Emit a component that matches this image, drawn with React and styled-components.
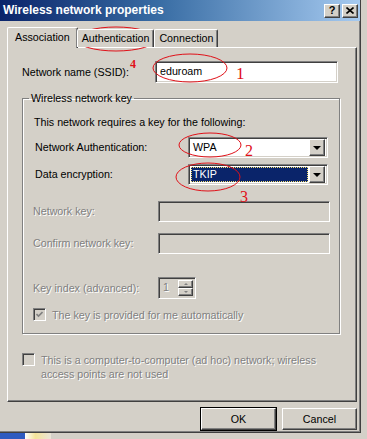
import styled, { createGlobalStyle, css } from "styled-components";

const GlobalStyle = createGlobalStyle`
  html, body {
    margin: 0;
    padding: 0;
  }
  body {
    background: #d4d0c8;
    font-family: "Liberation Sans", Arial, sans-serif;
    font-size: 10.7px;
    line-height: 13px;
    color: #000;
  }
`;

const raised = css`
  background: #d4d0c8;
  border: 1px solid;
  border-color: #fff #404040 #404040 #fff;
  box-shadow: inset -1px -1px 0 #808080;
`;

const sunken = css`
  border: 1px solid;
  border-color: #808080 #fff #fff #808080;
  box-shadow: inset 1px 1px 0 #404040, inset -1px -1px 0 #d4d0c8;
`;

const disabledText = css`
  color: #808080;
  text-shadow: 1px 1px 0 #fff;
`;

const Screen = styled.div`
  position: relative;
  width: 367px;
  height: 439px;
  overflow: hidden;
  background: #d4d0c8;
`;

const Window = styled.div`
  width: 361px;
  height: 433px;
  box-sizing: border-box;
  background: #d4d0c8;
  border-right: 1px solid #404040;
  border-bottom: 1px solid #404040;
  box-shadow: inset -1px -1px 0 #808080;
`;

const TitleBar = styled.div`
  height: 21px;
  display: flex;
  align-items: center;
  padding: 0 2px 0 3px;
  background: linear-gradient(to right, #0a246a 0%, #3a6ea5 45%, #a6caf0 100%);
`;

const Title = styled.span`
  flex: 1;
  color: #fff;
  font-weight: bold;
  font-size: 12px;
`;

const CaptionButton = styled.div`
  ${raised};
  width: 16px;
  height: 14px;
  box-sizing: border-box;
  margin-left: 2px;
  display: flex;
  align-items: center;
  justify-content: center;
  font-weight: bold;
  font-size: 11px;
`;

const Body = styled.div`
  padding: 5px 3px 0 7px;
`;

const Tabs = styled.div`
  display: flex;
  align-items: flex-end;
  height: 21px;
  position: relative;
  z-index: 1;
`;

const Tab = styled.div`
  box-sizing: border-box;
  height: ${p => (p.$active ? 21 : 18)}px;
  padding: ${p => (p.$active ? "3px 7px 0" : "2px 4px 0")};
  background: #d4d0c8;
  border-top: 1px solid #fff;
  border-left: 1px solid #fff;
  border-right: 1px solid #404040;
  border-radius: 2px 2px 0 0;
  box-shadow: inset -1px 0 0 #808080;
  margin-bottom: ${p => (p.$active ? -1 : 0)}px;
  ${p => p.$active && css`
    margin-right: -1px;
  `}
`;

const Panel = styled.div`
  box-sizing: border-box;
  width: 350px;
  height: 355px;
  border: 1px solid;
  border-color: #fff #404040 #404040 #fff;
  box-shadow: inset -1px -1px 0 #808080;
  padding: 13px 0 0 14px;
`;

const Row = styled.div`
  display: flex;
  align-items: center;
  height: ${p => p.$h || 21}px;
  margin-top: ${p => p.$mt || 0}px;
`;

const Label = styled.span`
  flex: none;
  box-sizing: border-box;
  width: ${p => p.$w}px;
  padding-left: ${p => p.$indent || 0}px;
  ${p => p.$disabled && disabledText};
`;

const TextField = styled.div`
  ${sunken};
  box-sizing: border-box;
  width: ${p => p.$w}px;
  height: ${p => p.$h || 21}px;
  background: ${p => (p.$disabled ? "#d4d0c8" : "#fff")};
  padding: 3px 4px;
`;

const Select = styled.div`
  ${sunken};
  box-sizing: border-box;
  width: 140px;
  height: 21px;
  background: #fff;
  display: flex;
  align-items: center;
  padding: 2px;
`;

const SelectValue = styled.div`
  flex: 1;
  height: 15px;
  box-sizing: border-box;
  padding: 1px 2px;
  margin-right: 1px;
  ${p => p.$selected && css`
    background: #0a246a;
    color: #fff;
    outline: 1px dotted #f5e070;
    outline-offset: -1px;
  `}
`;

const DropButton = styled.div`
  ${raised};
  box-sizing: border-box;
  width: 16px;
  height: 17px;
  display: flex;
  align-items: center;
  justify-content: center;
`;

const Arrow = styled.div`
  width: 0;
  height: 0;
  border-left: ${p => p.$size || 4}px solid transparent;
  border-right: ${p => p.$size || 4}px solid transparent;
  ${p => (p.$up
    ? css`border-bottom: ${p.$size || 4}px solid ${p.$color || "#000"};`
    : css`border-top: ${p.$size || 4}px solid ${p.$color || "#000"};`)}
`;

const Group = styled.fieldset`
  box-sizing: border-box;
  width: 317px;
  margin: 9px 0 0;
  padding: 0 9px 11px 10px;
  border: 1px solid #808080;
  box-shadow: inset 1px 1px 0 #fff, 1px 1px 0 #fff;
`;

const Legend = styled.legend`
  padding: 0 2px;
  margin-left: -4px;
  line-height: 13px;
`;

const Intro = styled.div`
  margin-top: 11px;
  padding-left: 1px;
`;

const Spinner = styled.div`
  ${sunken};
  box-sizing: border-box;
  width: 38px;
  height: 22px;
  display: flex;
  padding: 2px;
  background: #d4d0c8;
`;

const SpinValue = styled.div`
  flex: 1;
  padding: 1px 2px;
  ${disabledText};
`;

const SpinButtons = styled.div`
  width: 15px;
  display: flex;
  flex-direction: column;
`;

const SpinButton = styled.div`
  ${raised};
  flex: 1;
  display: flex;
  align-items: center;
  justify-content: center;
`;

const CheckRow = styled.div`
  display: flex;
  align-items: flex-start;
  margin-top: ${p => p.$mt || 0}px;
  padding-left: ${p => p.$indent || 0}px;
  line-height: 14px;
`;

const CheckBox = styled.div`
  ${sunken};
  flex: none;
  box-sizing: border-box;
  width: 13px;
  height: 13px;
  background: #d4d0c8;
  margin: 0 6px 0 0;
  display: flex;
  align-items: center;
  justify-content: center;
`;

const CheckText = styled.span`
  ${disabledText};
`;

const Buttons = styled.div`
  display: flex;
  justify-content: flex-end;
  gap: 6px;
  margin-top: 6px;
`;

const Button = styled.div`
  ${raised};
  box-sizing: border-box;
  width: 75px;
  height: 22px;
  display: flex;
  align-items: center;
  justify-content: center;
  ${p => p.$default && css`
    outline: 1px solid #000;
    outline-offset: 0;
  `}
`;

const Taskbar = styled.div`
  height: 6px;
  display: flex;
  background: #d4d0c8;
`;

const StartChunk = styled.div`
  width: 25px;
  background: #2f5bc0;
`;

const TrayBits = styled.div`
  width: 26px;
  background: linear-gradient(to right, #fff 0%, #f4e39a 40%, #e9e4d8 100%);
`;

const Annotations = styled.svg`
  position: absolute;
  left: 0;
  top: 0;
  pointer-events: none;
`;

const ellipses = [
  { cx: 116, cy: 39, rx: 40, ry: 12 },
  { cx: 190, cy: 68, rx: 37, ry: 14 },
  { cx: 210, cy: 145, rx: 31, ry: 12 },
  { cx: 208, cy: 177, rx: 32, ry: 14 },
];

const marks = [
  { x: 130, y: 68, size: 12, text: "4", bold: true },
  { x: 236, y: 79, size: 17, text: "1" },
  { x: 245, y: 156, size: 16, text: "2" },
  { x: 240, y: 202, size: 16, text: "3" },
];

const App = () => (
  <>
    <GlobalStyle />
    <Screen>
      <Window>
        <TitleBar>
          <Title>Wireless network properties</Title>
          <CaptionButton>?</CaptionButton>
          <CaptionButton>
            <svg width="8" height="7" viewBox="0 0 8 7">
              <path d="M0.5 0.5 L7.5 6.5 M7.5 0.5 L0.5 6.5" stroke="#000" strokeWidth="1.6" />
            </svg>
          </CaptionButton>
        </TitleBar>
        <Body>
          <Tabs>
            <Tab $active>Association</Tab>
            <Tab>Authentication</Tab>
            <Tab>Connection</Tab>
          </Tabs>
          <Panel>
            <Row $h={22}>
              <Label $w={133}>Network name (SSID):</Label>
              <TextField $w={183} $h={22}>eduroam</TextField>
            </Row>
            <Group>
              <Legend>Wireless network key</Legend>
              <Intro>This network requires a key for the following:</Intro>
              <Row $mt={8}>
                <Label $w={155} $indent={2}>Network Authentication:</Label>
                <Select>
                  <SelectValue>WPA</SelectValue>
                  <DropButton><Arrow /></DropButton>
                </Select>
              </Row>
              <Row $mt={6}>
                <Label $w={155} $indent={2}>Data encryption:</Label>
                <Select>
                  <SelectValue $selected>TKIP</SelectValue>
                  <DropButton><Arrow /></DropButton>
                </Select>
              </Row>
              <Row $mt={16}>
                <Label $w={125} $disabled>Network key:</Label>
                <TextField $w={172} $disabled />
              </Row>
              <Row $mt={11}>
                <Label $w={125} $disabled>Confirm network key:</Label>
                <TextField $w={172} $disabled />
              </Row>
              <Row $mt={23} $h={22}>
                <Label $w={125} $disabled>Key index (advanced):</Label>
                <Spinner>
                  <SpinValue>1</SpinValue>
                  <SpinButtons>
                    <SpinButton><Arrow $up $size={2} $color="#808080" /></SpinButton>
                    <SpinButton><Arrow $size={2} $color="#808080" /></SpinButton>
                  </SpinButtons>
                </Spinner>
              </Row>
              <CheckRow $mt={9}>
                <CheckBox>
                  <svg width="7" height="7" viewBox="0 0 7 7">
                    <path d="M0.5 3 L2.5 5 L6.5 1" stroke="#808080" strokeWidth="1.6" fill="none" />
                  </svg>
                </CheckBox>
                <CheckText>The key is provided for me automatically</CheckText>
              </CheckRow>
            </Group>
            <CheckRow $mt={19}>
              <CheckBox />
              <CheckText>
                This is a computer-to-computer (ad hoc) network; wireless
                <br />
                access points are not used
              </CheckText>
            </CheckRow>
          </Panel>
          <Buttons>
            <Button $default>OK</Button>
            <Button>Cancel</Button>
          </Buttons>
        </Body>
      </Window>
      <Taskbar>
        <StartChunk />
        <TrayBits />
      </Taskbar>
      <Annotations width="367" height="439" viewBox="0 0 367 439">
        {ellipses.map((e, i) => (
          <ellipse key={i} {...e} fill="none" stroke="#e01018" strokeWidth="1" />
        ))}
        {marks.map(m => (
          <text
            key={m.text}
            x={m.x}
            y={m.y}
            fill="#e01018"
            fontSize={m.size}
            fontWeight={m.bold ? "bold" : "normal"}
            fontFamily='"Liberation Serif", "Times New Roman", serif'
          >
            {m.text}
          </text>
        ))}
      </Annotations>
    </Screen>
  </>
);

export default App;
